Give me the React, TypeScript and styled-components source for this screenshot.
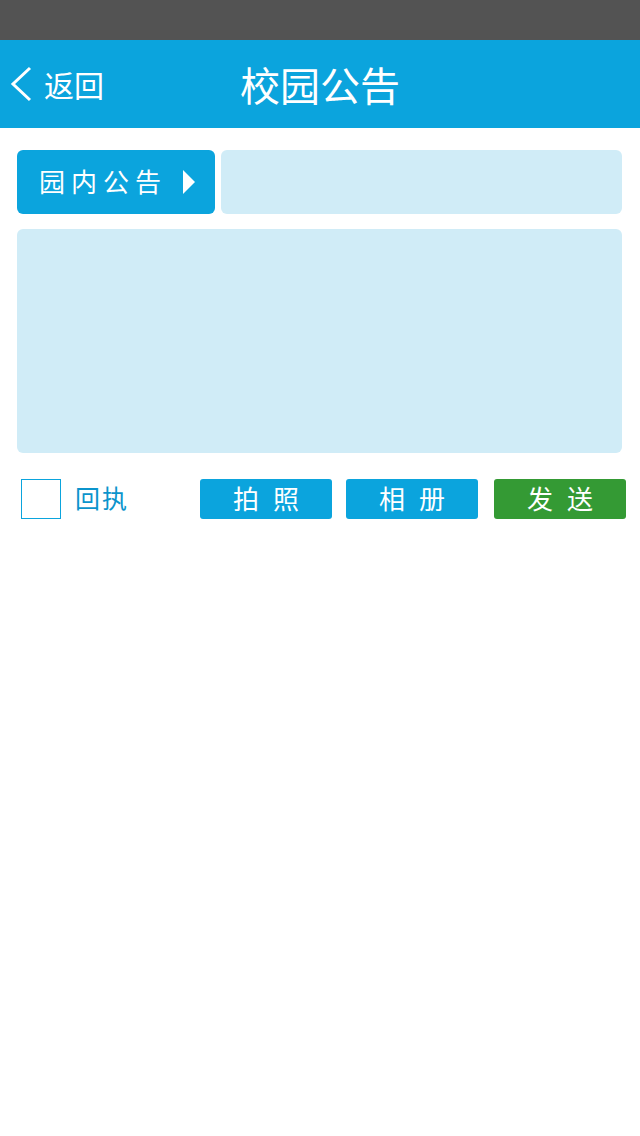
import styled, { createGlobalStyle } from "styled-components";

const GlobalStyle = createGlobalStyle`
  html, body {
    margin: 0;
    padding: 0;
    background: #ffffff;
    font-family: "Noto Sans CJK SC", "Noto Sans", sans-serif;
  }
`;

const Page = styled.div`
  width: 640px;
  min-height: 1136px;
  background: #ffffff;
`;

const StatusBar = styled.div`
  height: 40px;
  background: #535353;
`;

const Header = styled.header`
  height: 88px;
  background: #0ba4dd;
  display: flex;
  align-items: center;
  position: relative;
  color: #ffffff;
`;

const Back = styled.div`
  display: flex;
  align-items: center;
  padding-left: 9px;
  gap: 11px;
  font-size: 30px;
  line-height: 1;
`;

const Title = styled.h1`
  position: absolute;
  left: 0;
  right: 0;
  margin: 0;
  text-align: center;
  font-size: 40px;
  font-weight: 400;
  pointer-events: none;
`;

const Body = styled.div`
  padding: 22px 18px 0 17px;
  display: flex;
  flex-direction: column;
  gap: 15px;
`;

const TopRow = styled.div`
  display: flex;
  gap: 6px;
  height: 64px;
`;

const TypeButton = styled.div`
  width: 198px;
  background: #0ba4dd;
  border-radius: 6px;
  display: flex;
  align-items: center;
  padding: 0 0 4px 22px;
  box-sizing: border-box;
  color: #ffffff;
  font-size: 26px;
  letter-spacing: 6px;
`;

const Arrow = styled.span`
  margin: 4px 0 0 16px;
  width: 0;
  height: 0;
  border-top: 12px solid transparent;
  border-bottom: 12px solid transparent;
  border-left: 12px solid #ffffff;
`;

const Input = styled.div`
  flex: 1;
  background: #d0ecf7;
  border-radius: 6px;
`;

const TextArea = styled.div`
  height: 224px;
  background: #d0ecf7;
  border-radius: 6px;
`;

const BottomRow = styled.div`
  display: flex;
  align-items: center;
  margin-top: 25px;
  padding-left: 21px;
`;

const Check = styled.div`
  width: 40px;
  height: 40px;
  flex-shrink: 0;
  box-sizing: border-box;
  border: 1px solid #0ba4dd;
`;

const CheckLabel = styled.span`
  margin-left: 14px;
  width: 125px;
  flex-shrink: 0;
  color: #0b94cc;
  font-size: 25px;
  letter-spacing: 2px;
  padding-bottom: 3px;
`;

const Action = styled.button<{ $green?: boolean; $gap: number }>`
  margin: 1px 0 0 ${(p) => p.$gap}px;
  width: 132px;
  height: 40px;
  flex-shrink: 0;
  border: none;
  border-radius: 3px;
  background: ${(p) => (p.$green ? "#349a34" : "#0ba4dd")};
  color: #ffffff;
  font-family: inherit;
  font-size: 26px;
  letter-spacing: 14px;
  padding: 0 0 2px 14px;
  line-height: 38px;
`;

export default function App() {
  return (
    <Page>
      <GlobalStyle />
      <StatusBar />
      <Header>
        <Back>
          <svg width="24" height="36" viewBox="0 0 24 36">
            <path d="M21 2 L4 18 L21 34" fill="none" stroke="#fff" strokeWidth="3" />
          </svg>
          <span>返回</span>
        </Back>
        <Title>校园公告</Title>
      </Header>
      <Body>
        <TopRow>
          <TypeButton>
            园内公告
            <Arrow />
          </TypeButton>
          <Input />
        </TopRow>
        <TextArea />
      </Body>
      <BottomRow>
        <Check />
        <CheckLabel>回执</CheckLabel>
        <Action $gap={0}>拍照</Action>
        <Action $gap={14}>相册</Action>
        <Action $gap={16} $green>
          发送
        </Action>
      </BottomRow>
    </Page>
  );
}
